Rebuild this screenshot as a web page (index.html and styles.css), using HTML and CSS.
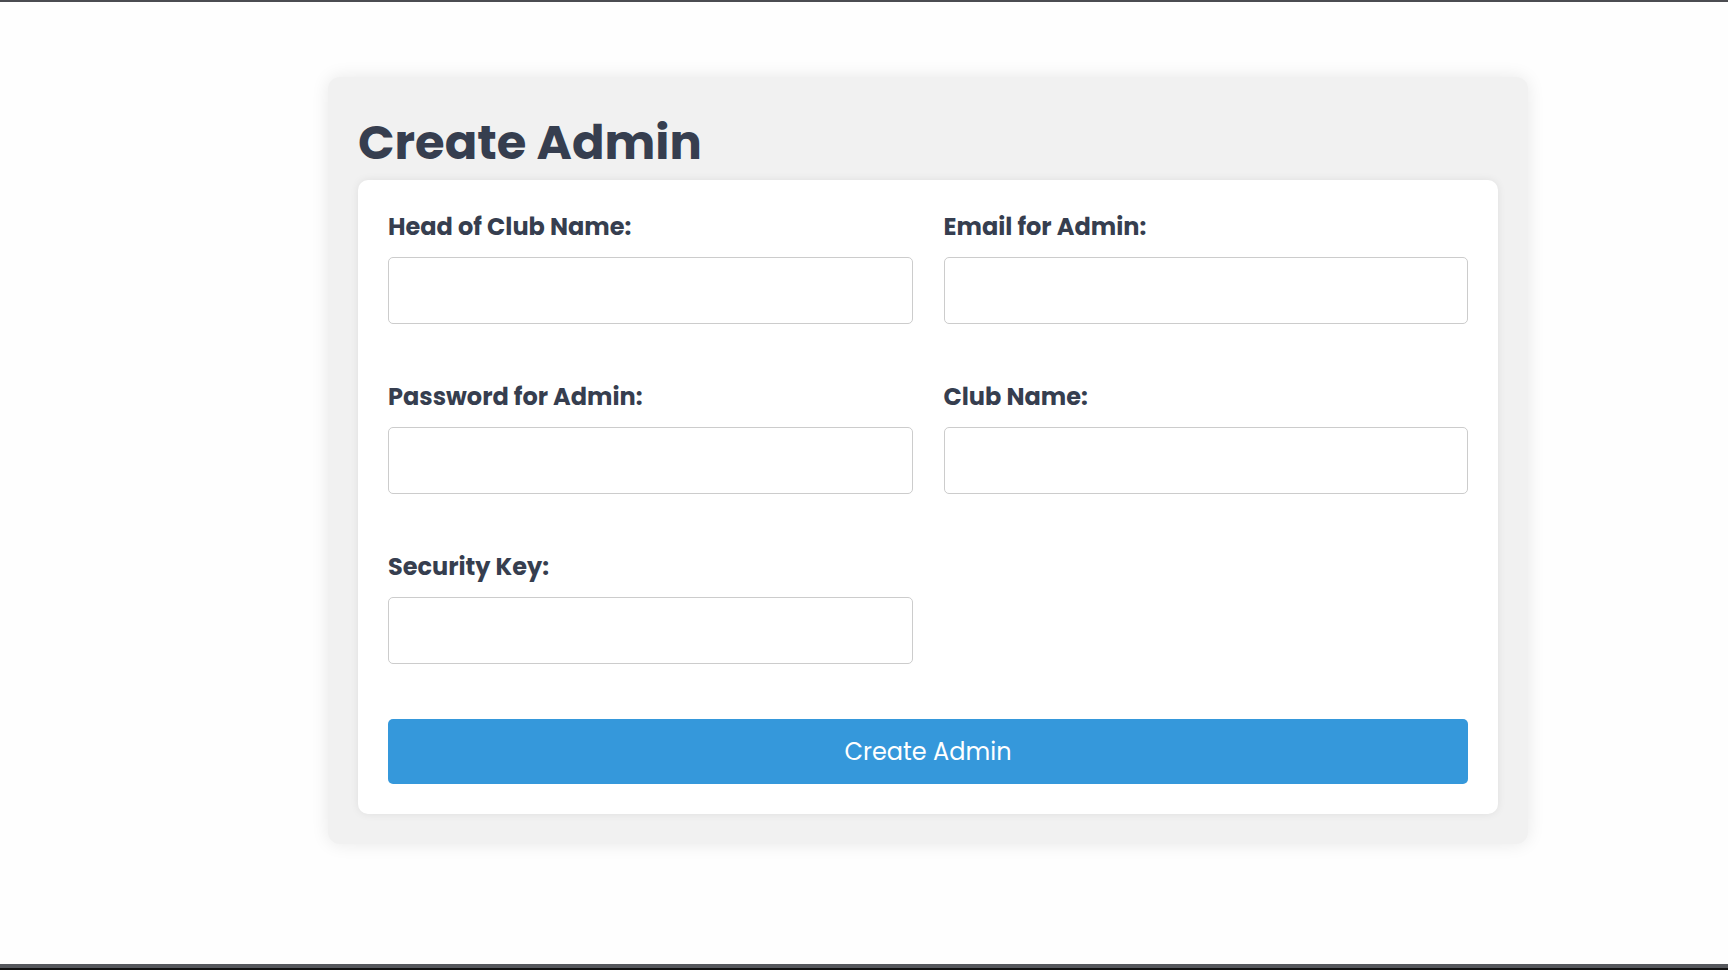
FILE: index.html
```html
<!DOCTYPE html>
<html lang="en">
<head>
<meta charset="utf-8">
<title>Create Admin</title>
<link rel="stylesheet" href="styles.css">
</head>
<body>
<div class="topline"></div>
<main class="page">
  <section class="panel">
    <h1 class="panel-title">Create Admin</h1>
    <form class="form-card">
      <div class="fields">
        <div class="field">
          <label class="field-label" for="head">Head of Club Name:</label>
          <input class="field-input" id="head" type="text">
        </div>
        <div class="field">
          <label class="field-label" for="email">Email for Admin:</label>
          <input class="field-input" id="email" type="email">
        </div>
        <div class="field">
          <label class="field-label" for="pass">Password for Admin:</label>
          <input class="field-input" id="pass" type="password">
        </div>
        <div class="field">
          <label class="field-label" for="club">Club Name:</label>
          <input class="field-input" id="club" type="text">
        </div>
        <div class="field">
          <label class="field-label" for="key">Security Key:</label>
          <input class="field-input" id="key" type="text">
        </div>
      </div>
      <button class="submit-btn" type="button">Create Admin</button>
    </form>
  </section>
</main>
<div class="bottombar"></div>
</body>
</html>
```
FILE: styles.css
```css
* { box-sizing: border-box; }
html, body { margin: 0; padding: 0; }
body {
  background: #fefefe;
  font-family: "Poppins", "Inter", "Noto Sans", sans-serif;
  color: #363e4f;
  min-height: 100vh;
  display: flex;
  flex-direction: column;
}
.topline {
  height: 2px;
  background: #4b4c51;
  flex: none;
}
.page {
  flex: 1;
  padding: 75px 0 0 328px;
}
.panel {
  width: 1200px;
  background: #f1f1f1;
  border-radius: 12px;
  box-shadow: 0 0 18px rgba(0, 0, 0, 0.09);
  padding: 30px;
}
.panel-title {
  margin: 0;
  padding-bottom: 2px;
  font-size: 48px;
  font-weight: 700;
  line-height: 71px;
  letter-spacing: 0;
}
.form-card {
  background: #fff;
  border-radius: 10px;
  box-shadow: 0 0 8px rgba(0, 0, 0, 0.08);
  padding: 30px;
}
.fields {
  display: grid;
  grid-template-columns: 1fr 1fr;
  column-gap: 31px;
  row-gap: 56px;
}
.field { display: flex; flex-direction: column; }
.field-label {
  font-size: 24px;
  font-weight: 700;
  line-height: 32px;
  padding-top: 1px;
  margin-bottom: 14px;
}
.field-input {
  height: 67px;
  border: 1px solid #cccccc;
  border-radius: 5px;
  background: #fff;
  font-family: inherit;
  font-size: 18px;
  padding: 0 14px;
}
.submit-btn {
  display: block;
  width: 100%;
  height: 65px;
  margin-top: 55px;
  border: none;
  border-radius: 5px;
  background: #3598db;
  color: #fff;
  font-family: inherit;
  font-size: 24px;
  font-weight: 400;
}
.bottombar {
  height: 6px;
  flex: none;
  background: #55575c;
  border-bottom: 2px solid #111;
}
```
